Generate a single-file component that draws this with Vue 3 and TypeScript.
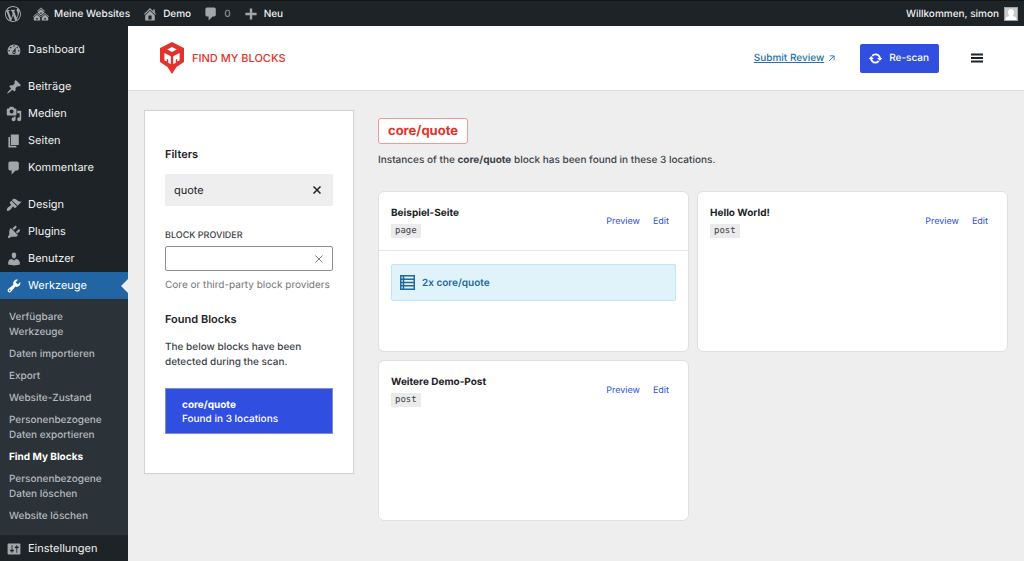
<script setup lang="ts">
import { ref } from 'vue'

interface MenuItem {
  label: string
  icon: string
  gap?: boolean
  active?: boolean
}

interface Location {
  title: string
  type: string
  blocks: string[]
}

const icons: Record<string, string> = {
  wordpress:
    'M20 10c0-5.51-4.49-10-10-10C4.48 0 0 4.49 0 10c0 5.52 4.48 10 10 10 5.51 0 10-4.48 10-10zM7.78 15.37L4.37 6.22c.55-.02 1.17-.08 1.17-.08.5-.06.44-1.13-.06-1.11 0 0-1.45.11-2.37.11-.18 0-.37 0-.58-.01C4.12 2.69 6.87 1.11 10 1.11c2.33 0 4.45.87 6.05 2.34-.68-.11-1.65.39-1.65 1.58 0 .74.45 1.36.9 2.1.35.61.55 1.36.55 2.46 0 1.49-1.4 5-1.4 5l-3.03-8.37c.54-.02.82-.17.82-.17.5-.05.44-1.25-.06-1.22 0 0-1.44.12-2.38.12-.87 0-2.33-.12-2.33-.12-.5-.03-.56 1.2-.06 1.22l.92.08 1.26 3.41zM17.41 10c.24-.64.74-1.87.43-4.25.7 1.29 1.05 2.71 1.05 4.25 0 3.29-1.73 6.24-4.4 7.78.97-2.59 1.94-5.2 2.92-7.78zM6.1 18.09C3.12 16.65 1.11 13.53 1.11 10c0-1.3.23-2.48.72-3.59C3.25 10.3 4.67 14.2 6.1 18.09zm4.03-6.63l2.58 6.98c-.86.29-1.76.45-2.71.45-.79 0-1.57-.11-2.29-.33.81-2.38 1.62-4.74 2.42-7.1z',
  sites:
    'M14.27 6.87L10 3.14 5.73 6.87 5 6.14l5-4.38 5 4.38zM14 8.42l-4.05 3.43L6 8.38v-.74l4-3.5 4 3.5v.78zM11 9.7V8H9v1.7h2zm-1.73 4.03L5 10 .73 13.73 0 13l5-4.38L10 13zm10 0L15 10l-4.27 3.73L10 13l5-4.38L20 13zM5 11l4 3.5V18H1v-3.5zm10 0l4 3.5V18h-8v-3.5zm-9 6v-2H4v2h2zm10 0v-2h-2v2h2z',
  home: 'M16 8.5l1.53 1.53-1.06 1.06L10 4.6l-6.47 6.49-1.06-1.06L10 2.5l4 4v-2h2v4zm-6-2.46l6 5.99V18H4v-5.97zM12 17v-5H8v5h4z',
  plus: 'M17 8.5v3h-5.500V17h-3v-5.500H3v-3h5.500V3h3v5.500z',
  dashboard:
    'M3.76 16h12.48c1.1-1.37 1.76-3.11 1.76-5 0-4.42-3.58-8-8-8s-8 3.58-8 8c0 1.89.66 3.63 1.76 5zM10 4c.55 0 1 .45 1 1s-.45 1-1 1-1-.45-1-1 .45-1 1-1zM6 6c.55 0 1 .45 1 1s-.45 1-1 1-1-.45-1-1 .45-1 1-1zm8 0c.55 0 1 .45 1 1s-.45 1-1 1-1-.45-1-1 .45-1 1-1zm-5.37 5.55L12 7v6c0 1.1-.9 2-2 2s-2-.9-2-2c0-.57.24-1.08.63-1.45zM4 10c.55 0 1 .45 1 1s-.45 1-1 1-1-.45-1-1 .45-1 1-1zm12 0c.55 0 1 .45 1 1s-.45 1-1 1-1-.45-1-1 .45-1 1-1zm-5 3c0-.55-.45-1-1-1s-1 .45-1 1 .45 1 1 1 1-.45 1-1z',
  post: 'M10.44 3.02l1.82-1.82 6.36 6.35-1.83 1.82c-1.05-.68-2.48-.57-3.41.36l-.75.75c-.92.93-1.04 2.35-.35 3.41l-1.83 1.82-2.41-2.41-2.8 2.79c-.42.42-3.38 2.71-3.8 2.29s1.86-3.39 2.28-3.81l2.79-2.79L4.1 9.36l1.83-1.82c1.05.69 2.48.57 3.4-.36l.75-.75c.93-.92 1.05-2.35.36-3.41z',
  media:
    'M13 11V4c0-.55-.45-1-1-1h-1.67L9 1H5L3.67 3H2c-.55 0-1 .45-1 1v7c0 .55.45 1 1 1h10c.55 0 1-.45 1-1zM7 4.5c1.38 0 2.5 1.12 2.5 2.5S8.38 9.5 7 9.5 4.5 8.38 4.5 7 5.62 4.5 7 4.5zM14 6h5v10.5c0 1.38-1.12 2.5-2.5 2.5S14 17.88 14 16.5s1.12-2.5 2.5-2.5c.17 0 .34.02.5.05V9h-3V6zm-4 8.05V13h2v3.5c0 1.38-1.12 2.5-2.5 2.5S7 17.88 7 16.5 8.12 14 9.5 14c.17 0 .34.02.5.05z',
  page: 'M6 15V2h10v13H6zm-1 1h8v2H3V5h2v11z',
  comment: 'M5 2h9c1.1 0 2 .9 2 2v7c0 1.1-.9 2-2 2h-2l-5 5v-5H5c-1.1 0-2-.9-2-2V4c0-1.1.9-2 2-2z',
  design:
    'M14.48 11.06L7.41 3.99l1.5-1.5c.5-.56 2.3-.47 3.51.32 1.21.8 1.43 1.28 2.91 2.1 1.18.64 2.45 1.26 4.45.85zm-.71.71L6.7 4.7 4.93 6.47c-.39.39-.39 1.02 0 1.41l1.06 1.06c.39.39.39 1.03 0 1.42-.6.6-1.43 1.11-2.21 1.69-.35.26-.7.53-1.01.84C1.43 14.23.4 16.08 1.4 17.07c.99 1 2.84-.03 4.18-1.36.31-.31.58-.66.85-1.02.57-.78 1.08-1.61 1.69-2.21.39-.39 1.02-.39 1.41 0l1.06 1.06c.39.39 1.02.39 1.41 0z',
  plugins:
    'M13.11 4.36L9.87 7.6 8 5.73l3.24-3.24c.35-.34 1.05-.2 1.56.32.52.51.66 1.21.31 1.55zm-8 1.77l.91-1.12 9.01 9.01-1.19.84c-.71.71-2.63 1.16-3.82 1.16H6.14L4.9 17.26c-.59.59-1.54.59-2.12 0-.59-.58-.59-1.53 0-2.12l1.24-1.24v-3.88c0-1.13.4-3.19 1.09-3.89zm7.26 3.97l3.24-3.24c.34-.35 1.04-.21 1.55.31.52.51.66 1.21.31 1.55l-3.24 3.25z',
  users:
    'M10 9.25c-2.27 0-2.73-3.44-2.73-3.44C7 4.02 7.82 2 9.97 2c2.16 0 2.98 2.02 2.71 3.81 0 0-.41 3.44-2.68 3.44zm0 2.57L12.72 10c2.39 0 4.52 2.33 4.52 4.53v2.49s-3.65 1.13-7.24 1.13c-3.65 0-7.24-1.13-7.24-1.13v-2.49c0-2.25 1.94-4.48 4.47-4.48z',
  tools:
    'M16.68 9.77c-1.34 1.34-3.3 1.67-4.95.99l-5.41 6.52c-.99.99-2.59.99-3.58 0s-.99-2.59 0-3.57l6.52-5.42c-.68-1.65-.35-3.61.99-4.95 1.28-1.28 3.12-1.62 4.72-1.06l-2.89 2.89 2.82 2.82 2.86-2.87c.53 1.58.18 3.39-1.08 4.65zM3.81 16.21c.4.39 1.04.39 1.43 0 .4-.4.4-1.04 0-1.43-.39-.4-1.03-.4-1.43 0-.39.39-.39 1.03 0 1.43z',
  settings:
    'M18 16V4c0-.55-.45-1-1-1H3c-.55 0-1 .45-1 1v12c0 .55.45 1 1 1h14c.55 0 1-.45 1-1zM8 11h1c.55 0 1 .45 1 1s-.45 1-1 1H8v1.5c0 .28-.22.5-.5.5s-.5-.22-.5-.5V13H6c-.55 0-1-.45-1-1s.45-1 1-1h1V5.5c0-.28.22-.5.5-.5s.5.22.5.5V11zm5-2h-1c-.55 0-1-.45-1-1s.45-1 1-1h1V5.5c0-.28.22-.5.5-.5s.5.22.5.5V7h1c.55 0 1 .45 1 1s-.45 1-1 1h-1v5.5c0 .28-.22.5-.5.5s-.5-.22-.5-.5V9z',
  update:
    'M10.2 3.28c3.53 0 6.43 2.61 6.92 6h2.08l-3.5 4-3.5-4h2.32c-.45-1.97-2.21-3.45-4.32-3.45-1.45 0-2.73.71-3.54 1.78L4.95 5.66C6.23 4.2 8.11 3.28 10.2 3.28zm-.4 13.44c-3.52 0-6.43-2.61-6.92-6H.8l3.5-4c1.17 1.33 2.33 2.67 3.5 4H5.48c.45 1.97 2.21 3.45 4.32 3.45 1.45 0 2.73-.71 3.54-1.78l1.71 1.95c-1.28 1.46-3.15 2.38-5.25 2.38z',
}

const menu: MenuItem[] = [
  { label: 'Dashboard', icon: 'dashboard' },
  { label: 'Beiträge', icon: 'post', gap: true },
  { label: 'Medien', icon: 'media' },
  { label: 'Seiten', icon: 'page' },
  { label: 'Kommentare', icon: 'comment' },
  { label: 'Design', icon: 'design', gap: true },
  { label: 'Plugins', icon: 'plugins' },
  { label: 'Benutzer', icon: 'users' },
  { label: 'Werkzeuge', icon: 'tools', active: true },
]

const submenu: string[] = [
  'Verfügbare Werkzeuge',
  'Daten importieren',
  'Export',
  'Website-Zustand',
  'Personenbezogene Daten exportieren',
  'Find My Blocks',
  'Personenbezogene Daten löschen',
  'Website löschen',
]
const currentPage = 'Find My Blocks'

const locations: Location[] = [
  { title: 'Beispiel-Seite', type: 'page', blocks: ['2x core/quote'] },
  { title: 'Hello World!', type: 'post', blocks: [] },
  { title: 'Weitere Demo-Post', type: 'post', blocks: [] },
]

const search = ref('quote')
const provider = ref('')
</script>

<template>
  <div class="admin">
    <header class="adminbar">
      <a class="bar-link" href="#" aria-label="WordPress"><svg class="icon" viewBox="0 0 20 20"><path :d="icons.wordpress" /></svg></a>
      <a class="bar-link" href="#"><svg class="icon" viewBox="0 0 20 20"><path :d="icons.sites" /></svg>Meine Websites</a>
      <a class="bar-link" href="#"><svg class="icon" viewBox="0 0 20 20"><path :d="icons.home" /></svg>Demo</a>
      <a class="bar-link muted" href="#"><svg class="icon" viewBox="0 0 20 20"><path :d="icons.comment" /></svg>0</a>
      <a class="bar-link" href="#"><svg class="icon" viewBox="0 0 20 20"><path :d="icons.plus" /></svg>Neu</a>
      <a class="bar-link account" href="#">
        Willkommen, simon
        <svg class="avatar" viewBox="0 0 14 14">
          <rect width="14" height="14" fill="#c9cacb" />
          <path fill="#fff" d="M7 2c1.900 0 3 1.400 3 3.200 0 1.300-.5 2.300-1.200 2.900v.8c1.700.5 3.200 1.200 3.600 2.300V14H1.600v-2.800c.4-1.100 1.900-1.800 3.600-2.300v-.8C4.500 7.500 4 6.500 4 5.200 4 3.400 5.100 2 7 2z" />
          <rect x="0.500" y="0.500" width="13" height="13" fill="none" stroke="#a0a3a6" />
        </svg>
      </a>
    </header>

    <div class="layout">
      <nav class="sidebar" aria-label="Hauptmenü">
        <ul class="menu">
          <li v-for="item in menu" :key="item.label" :class="{ gap: item.gap }">
            <a href="#" class="menu-link" :class="{ active: item.active }">
              <svg class="icon" viewBox="0 0 20 20"><path :d="icons[item.icon]" /></svg>{{ item.label }}
            </a>
          </li>
        </ul>
        <ul class="submenu">
          <li v-for="entry in submenu" :key="entry">
            <a href="#" :class="{ current: entry === currentPage }">{{ entry }}</a>
          </li>
        </ul>
        <a href="#" class="menu-link"><svg class="icon" viewBox="0 0 20 20"><path :d="icons.settings" /></svg>Einstellungen</a>
      </nav>

      <main class="main">
        <header class="plugin-header">
          <a class="brand" href="#">
            <svg class="brand-mark" viewBox="0 0 24 32">
              <path fill="#e0332b" d="M12 0l12 6v14l-7.500 5L12 32l-4.500-7L0 20V6z" />
              <path fill="#fff" d="M12 5l4.800 2.500L12 10 7.200 7.500zM4.400 11l6.400 3.200v8L8.200 20.800v-3.200l-1.400-.7v2.700L4.400 18.200zM19.600 11l-6.400 3.200v8l2.600-1.400v-3.200l1.400-.7v2.700l2.400-1.400z" />
            </svg>
            FIND MY BLOCKS
          </a>
          <div class="actions">
            <a class="review" href="#">
              <span>Submit Review</span>
              <svg class="arrow" viewBox="0 0 8 8"><path d="M1 7l5.800-5.800M2 1h5v5" /></svg>
            </a>
            <button class="rescan" type="button"><svg class="icon-sm" viewBox="0 0 20 20"><path :d="icons.update" /></svg>Re-scan</button>
            <button class="burger" type="button" aria-label="Menu">
              <svg viewBox="0 0 12 10"><path d="M0 1.500h12M0 5h12M0 8.500h12" /></svg>
            </button>
          </div>
        </header>

        <div class="content">
          <aside class="filters">
            <h2>Filters</h2>
            <div class="search">
              <input v-model="search" type="text" aria-label="Filters" />
              <button type="button" aria-label="Clear search" @click="search = ''">
                <svg viewBox="0 0 8 8"><path d="M0.500 0.500l7 7M7.500 0.500l-7 7" /></svg>
              </button>
            </div>
            <label for="provider">BLOCK PROVIDER</label>
            <div class="provider">
              <input id="provider" v-model="provider" type="text" aria-describedby="provider-help" />
              <button type="button" aria-label="Clear provider" @click="provider = ''">
                <svg viewBox="0 0 8 8"><path d="M0.500 0.500l7 7M7.500 0.500l-7 7" /></svg>
              </button>
            </div>
            <p id="provider-help" class="help">Core or third-party block providers</p>
            <h2>Found Blocks</h2>
            <p class="detected">The below blocks have been detected during the scan.</p>
            <button class="found" type="button">
              <strong>core/quote</strong>
              <span>Found in 3 locations</span>
            </button>
          </aside>

          <section class="results">
            <h1>core/quote</h1>
            <p class="summary">Instances of the <strong>core/quote</strong> block has been found in these 3 locations.</p>
            <div class="cards">
              <article v-for="place in locations" :key="place.title" class="card">
                <header class="card-head" :class="{ divided: place.blocks.length }">
                  <div>
                    <h3>{{ place.title }}</h3>
                    <code>{{ place.type }}</code>
                  </div>
                  <div class="card-links">
                    <a href="#">Preview</a>
                    <a href="#">Edit</a>
                  </div>
                </header>
                <ul v-if="place.blocks.length" class="blocks">
                  <li v-for="block in place.blocks" :key="block">
                    <svg viewBox="0 0 15 15">
                      <path d="M0.750 0.750h13.500v13.500H0.750zM3.500 1v13M1 4.200h13M1 7.500h13M1 10.800h13" />
                    </svg>
                    {{ block }}
                  </li>
                </ul>
              </article>
            </div>
          </section>
        </div>
      </main>
    </div>
  </div>
</template>

<style>
body {
  margin: 0;
  background: #eeeeee;
}
</style>

<style scoped>
.admin {
  display: flex;
  flex-direction: column;
  min-height: 100vh;
  font-family: Inter, "Liberation Sans", sans-serif;
  font-size: 10px;
  font-weight: 500;
  line-height: 15px;
  color: #3c434a;
  text-rendering: geometricPrecision;
}
.admin *,
.admin {
  box-sizing: border-box;
}
a {
  text-decoration: none;
  color: inherit;
}
ul {
  list-style: none;
  margin: 0;
  padding: 0;
}
h1,
h2,
h3,
p {
  margin: 0;
}
button,
input {
  font: inherit;
  color: inherit;
  margin: 0;
  padding: 0;
  border: 0;
  background: none;
  text-rendering: inherit;
}
svg {
  display: block;
  flex: none;
}
.icon {
  width: 16px;
  height: 16px;
  fill: #a2a7ab;
}

.adminbar {
  display: flex;
  align-items: center;
  gap: 12px;
  height: 26px;
  padding: 0 6px 0 5px;
  background: #1d2327;
  border-top: 1px solid #111517;
  color: #f0f0f1;
}
.bar-link {
  display: flex;
  align-items: center;
  gap: 5px;
  line-height: 16px;
  white-space: nowrap;
}
.muted {
  color: #8c9196;
}
.account {
  margin-left: auto;
}
.avatar {
  width: 14px;
  height: 14px;
}

.layout {
  display: flex;
  flex: 1;
}
.sidebar {
  flex: none;
  width: 128px;
  background: #1d2327;
  color: #f0f0f1;
}
.menu {
  padding-top: 10px;
}
.gap {
  padding-top: 10px;
}
.menu-link {
  position: relative;
  display: flex;
  align-items: center;
  gap: 6px;
  height: 27px;
  padding-left: 6px;
  font-size: 11px;
  font-weight: 400;
}
.menu-link.active {
  background: #2265a5;
  color: #fff;
}
.menu-link.active .icon {
  fill: #fff;
}
.menu-link.active::after {
  content: "";
  position: absolute;
  right: 0;
  top: 7px;
  border: 7px solid transparent;
  border-left: 0;
  border-right-color: #eeeeee;
}
.submenu {
  padding: 8px 16px 7px 9px;
  background: #2c3338;
  color: #b4b9be;
}
.submenu a {
  display: block;
  padding: 3px 0 4px;
}
.submenu .current {
  font-weight: 700;
  color: #fff;
}

.main {
  flex: 1;
  min-width: 0;
  background: #eeeeee;
}
.plugin-header {
  display: flex;
  align-items: center;
  justify-content: space-between;
  height: 65px;
  padding: 0 35px 0 32px;
  background: #fff;
  border-bottom: 1px solid #dddddd;
}
.brand {
  display: flex;
  align-items: center;
  gap: 8px;
  font-size: 11px;
  color: #e0332b;
}
.brand-mark {
  width: 24px;
  height: 32px;
}
.actions {
  display: flex;
  align-items: center;
  line-height: 16px;
}
.review {
  display: flex;
  align-items: center;
  gap: 4px;
  color: #2271b1;
}
.review span {
  text-decoration: underline;
}
.arrow {
  width: 7px;
  height: 7px;
  fill: none;
  stroke: currentColor;
}
.rescan {
  display: flex;
  align-items: center;
  gap: 6px;
  height: 29px;
  margin-left: 25px;
  padding: 0 10px 0 8px;
  border-radius: 2px;
  background: #304fe0;
  color: #fff;
}
.icon-sm {
  width: 15px;
  height: 15px;
  fill: currentColor;
}
.burger {
  margin-left: 26px;
  padding: 6px;
}
.burger svg {
  width: 12px;
  height: 10px;
  stroke: #1d2327;
  stroke-width: 2;
}

.content {
  display: flex;
  align-items: flex-start;
  gap: 24px;
  padding: 19px 16px;
}
.filters {
  flex: none;
  width: 210px;
  padding: 35px 20px 39px;
  border: 1px solid #d0d1d3;
  background: #fff;
}
h2 {
  font-size: 11px;
  line-height: 16px;
  font-weight: 600;
  color: #1d2327;
}
.search {
  display: flex;
  align-items: center;
  height: 32px;
  margin: 12px 0 22px;
  padding: 0 9px;
  border-radius: 2px;
  background: #eeeeee;
  color: #1d2327;
  font-size: 11px;
  font-weight: 400;
}
.search input,
.provider input {
  flex: 1;
  min-width: 0;
  outline: 0;
}
.search button,
.provider button {
  padding: 3px;
}
.search svg,
.provider svg {
  width: 8px;
  height: 8px;
  stroke: currentColor;
}
.search svg {
  stroke-width: 1.5;
}
.filters label {
  display: block;
  font-size: 9px;
}
.provider {
  display: flex;
  align-items: center;
  height: 25px;
  margin: 3px 0 7px;
  padding: 0 6px;
  border: 1px solid #8c8f94;
  border-radius: 2px;
  color: #787c82;
}
.help {
  margin-bottom: 18px;
  font-weight: 400;
  color: #757575;
}
.detected {
  margin: 13px 0 18px;
}
.found {
  display: flex;
  flex-direction: column;
  width: 100%;
  padding: 9px 16px 7px;
  border: 1px solid #7d8ccb;
  background: #304fe0;
  color: #fff;
  text-align: left;
  line-height: 14px;
}

.results {
  flex: 1;
  min-width: 0;
  padding-top: 8px;
}
h1 {
  width: fit-content;
  padding: 3px 9px;
  border: 1px solid #f19a96;
  border-radius: 3px;
  background: #fff;
  font-size: 13px;
  line-height: 18px;
  font-weight: 700;
  color: #e0332b;
}
.summary {
  margin: 9px 0 23px;
}
strong {
  font-weight: 700;
}
.cards {
  display: grid;
  grid-template-columns: 1fr 1fr;
  grid-auto-rows: minmax(161px, auto);
  gap: 8px;
}
.card {
  border: 1px solid #e0e0e0;
  border-radius: 6px;
  background: #fff;
}
.card-head {
  display: flex;
  align-items: center;
  justify-content: space-between;
  padding: 13px 19px 12px 12px;
}
.divided {
  border-bottom: 1px solid #e6e6e6;
}
h3 {
  font-size: 10px;
  line-height: 16px;
  font-weight: 700;
  color: #1d2327;
}
code {
  display: block;
  width: fit-content;
  margin-top: 3px;
  padding: 0 4px;
  background: #ebebeb;
  font-family: "DejaVu Sans Mono", monospace;
  font-size: 9px;
  font-weight: 400;
  line-height: 14px;
}
.card-links {
  display: flex;
  gap: 13px;
  font-size: 9px;
  font-weight: 400;
  color: #304fe0;
}
.blocks {
  padding: 13px 12px;
}
.blocks li {
  display: flex;
  align-items: center;
  gap: 7px;
  height: 37px;
  padding: 0 8px;
  border: 1px solid #bfe6f2;
  border-radius: 2px;
  background: #e1f3fa;
  line-height: 16px;
  font-weight: 600;
  color: #21699b;
}
.blocks svg {
  width: 15px;
  height: 15px;
  fill: none;
  stroke: currentColor;
  stroke-width: 1.5;
}
</style>
